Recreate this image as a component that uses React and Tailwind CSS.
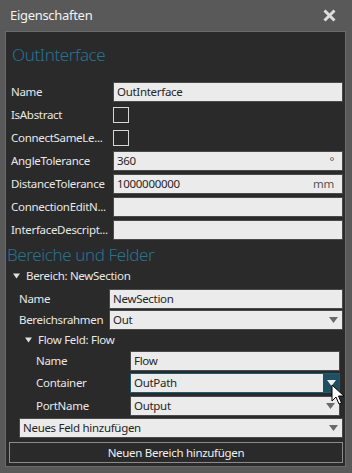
import React from 'react';

const font = { fontFamily: '"Noto Sans", "Open Sans", sans-serif' };

function Arrow({ className = 'fill-[#6a6a6a]' }) {
  return (
    <svg width="9" height="6" viewBox="0 0 9 6" className={className}>
      <path d="M0 0 H9 L4.5 6 Z" />
    </svg>
  );
}

function Caret() {
  return (
    <svg width="7" height="6" viewBox="0 0 7 6" className="fill-[#e0e0e0] shrink-0">
      <path d="M0 0.5 H7 L3.5 5.5 Z" />
    </svg>
  );
}

function Field({ value, unit, className = '' }) {
  return (
    <div className={`h-[20px] bg-[#ebebeb] border border-[#4a4a4a] flex items-center px-[3px] text-[11.5px] text-[#262626] ${className}`}>
      <span className="flex-1 truncate">{value}</span>
      {unit && <span className="text-[#555] pr-[5px]">{unit}</span>}
    </div>
  );
}

function Select({ value, className = '' }) {
  return (
    <div className={`h-[20px] bg-[#ebebeb] border border-[#4a4a4a] flex items-center pl-[3px] pr-[4px] text-[11.5px] text-[#262626] ${className}`}>
      <span className="flex-1 truncate">{value}</span>
      <Arrow />
    </div>
  );
}

function Check() {
  return <div className="w-[16px] h-[16px] border border-[#d6d6d6]" />;
}

function Row({ label, children }) {
  return (
    <div className="h-[20px] flex items-center">
      <div className="w-[107px] pl-[5px] text-[11.5px] text-[#e8e8e8] whitespace-nowrap overflow-hidden">{label}</div>
      <div className="flex-1 flex items-center">{children}</div>
    </div>
  );
}

export default function App() {
  return (
    <div className="w-[352px] h-[473px] bg-[#595959] relative overflow-hidden select-none tracking-[-0.3px]" style={font}>
      <div className="h-[31px] flex items-center justify-between pl-[10px] pr-[16px]">
        <span className="text-[13px] text-[#f2f2f2]">Eigenschaften</span>
        <svg width="13" height="13" viewBox="0 0 13 13" className="stroke-[#dcdcdc]">
          <path d="M1.5 1.5 L11.5 11.5 M11.5 1.5 L1.5 11.5" strokeWidth="3" />
        </svg>
      </div>

      <div className="ml-[5px] mr-[6px] h-[436px] border border-[#6b6b6b] bg-[#2a2a2a] flex flex-col pr-[2px]">
        <div className="mt-[10px] h-[26px] leading-[26px] pl-[6px] text-[17px] tracking-[-0.4px] font-light text-[#257392]">OutInterface</div>

        <div className="mt-[14px] flex flex-col gap-[3px]">
          <Row label="Name"><Field value="OutInterface" className="w-full" /></Row>
          <Row label="IsAbstract"><Check /></Row>
          <Row label="ConnectSameLe..."><Check /></Row>
          <Row label="AngleTolerance"><Field value="360" unit="°" className="w-full" /></Row>
          <Row label="DistanceTolerance"><Field value="1000000000" unit="mm" className="w-full" /></Row>
          <Row label="ConnectionEditN..."><Field value="" className="w-full" /></Row>
          <Row label="InterfaceDescript..."><Field value="" className="w-full" /></Row>
        </div>

        <div className="mt-[3px] h-[24px] leading-[24px] pl-[1px] text-[17px] tracking-[-0.4px] font-light text-[#257392]">Bereiche und Felder</div>

        <div className="h-[18px] flex items-center gap-[6px] pl-[7px] text-[11.5px] text-[#e8e8e8]">
          <Caret />
          <span>Bereich: NewSection</span>
        </div>

        <div className="mt-[4px] flex flex-col gap-[1px] pl-[13px]">
          <div className="h-[20px] flex items-center">
            <span className="w-[90px] text-[11.5px] text-[#e8e8e8]">Name</span>
            <Field value="NewSection" className="flex-1" />
          </div>
          <div className="h-[20px] flex items-center">
            <span className="w-[90px] text-[11.5px] text-[#e8e8e8] whitespace-nowrap">Bereichsrahmen</span>
            <Select value="Out" className="flex-1" />
          </div>
        </div>

        <div className="h-[20px] flex items-center gap-[6px] pl-[19px] text-[11.5px] text-[#e8e8e8]">
          <Caret />
          <span>Flow Feld: Flow</span>
        </div>

        <div className="mt-[1px] flex flex-col pl-[30px] pr-[3px]">
          <div className="h-[20px] flex items-center">
            <span className="w-[94px] text-[11.5px] text-[#e8e8e8]">Name</span>
            <Field value="Flow" className="flex-1" />
          </div>
          <div className="mt-[2px] h-[20px] flex items-center">
            <span className="w-[94px] text-[11.5px] text-[#e8e8e8]">Container</span>
            <div className="flex-1 h-[20px] bg-[#ebebeb] border border-[#1c5b72] flex items-center text-[11.5px] text-[#262626]">
              <span className="flex-1 pl-[3px]">OutPath</span>
              <div className="w-[16px] h-full bg-[#1f4f61] flex items-center justify-center">
                <Arrow className="fill-[#f0f0f0]" />
              </div>
            </div>
          </div>
          <div className="mt-[3px] h-[20px] flex items-center">
            <span className="w-[94px] text-[11.5px] text-[#e8e8e8]">PortName</span>
            <Select value="Output" className="flex-1" />
          </div>
        </div>

        <div className="mt-[2px] pl-[13px]">
          <Select value="Neues Feld hinzufügen" />
        </div>

        <div className="mt-[4px] pl-[3px]">
          <div className="h-[21px] border border-[#8c8c8c] flex items-center justify-center text-[11.5px] text-[#f0f0f0]">
            Neuen Bereich hinzufügen
          </div>
        </div>
      </div>

      <svg width="14" height="22" viewBox="0 0 14 22" className="absolute left-[331px] top-[384px]">
        <path d="M1 1 L1 17 L5 13 L8 20 L10.5 19 L7.5 12 L13 12 Z" fill="#fff" stroke="#000" strokeWidth="1" strokeLinejoin="round" />
      </svg>
    </div>
  );
}
